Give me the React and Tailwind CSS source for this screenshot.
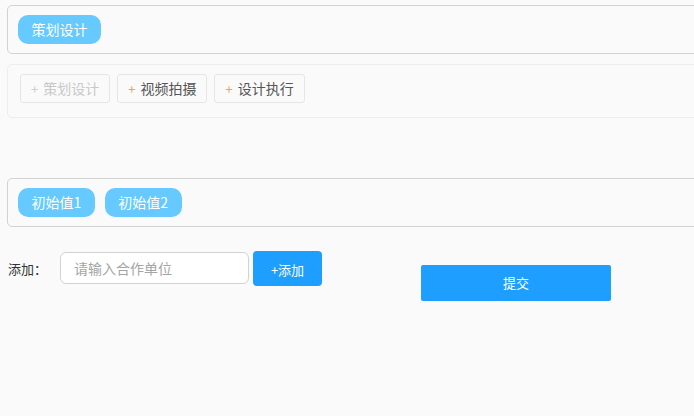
export default function App() {
  const font = { fontFamily: '"Noto Sans CJK SC", "Liberation Sans", sans-serif' };
  const options = [
    { label: "策划设计", disabled: true },
    { label: "视频拍摄", disabled: false },
    { label: "设计执行", disabled: false },
  ];

  return (
    <div className="w-[694px] h-[416px] overflow-hidden bg-[#fafafa] pt-[5px]" style={font}>
      <div className="ml-[7px] w-[720px] h-[49px] border border-[#d2d2d2] rounded-[5px] px-[10px] py-[9px] flex gap-[10px]">
        <span className="h-[29px] px-[13.5px] rounded-[10px] bg-[#66c9ff] text-white text-[14px] leading-[29px]">
          策划设计
        </span>
      </div>

      <div className="ml-[7px] mt-[10px] w-[720px] h-[54px] border border-[#ededed] rounded-[5px] px-[12px] py-[9px] flex gap-[7px]">
        {options.map((o) => (
          <button
            key={o.label}
            className={
              "h-[29px] px-[10px] rounded-[3px] border border-[#e6e6e6] text-[14px] flex items-center gap-[5px] " +
              (o.disabled ? "text-[#c8c8c8]" : "text-[#555]")
            }
          >
            <span className={"text-[13px] " + (o.disabled ? "text-[#cfcfcf]" : "text-[#f5a53a]")}>+</span>
            {o.label}
          </button>
        ))}
      </div>

      <div className="ml-[7px] mt-[60px] w-[720px] h-[49px] border border-[#d2d2d2] rounded-[5px] px-[10px] py-[9px] flex gap-[10px]">
        {["初始值1", "初始值2"].map((t) => (
          <span key={t} className="h-[29px] px-[13.5px] rounded-[10px] bg-[#66c9ff] text-white text-[14px] leading-[29px]">
            {t}
          </span>
        ))}
      </div>

      <div className="mt-[24px] flex items-start">
        <span className="ml-[8px] mt-[8px] text-[13px] text-[#333] w-[52px]">添加：</span>
        <input
          placeholder="请输入合作单位"
          className="w-[189px] h-[32px] mt-[1px] border border-[#d2d2d2] rounded-[6px] bg-white px-[13px] text-[14px] text-[#333] placeholder-[#a5a5a5] outline-none"
        />
        <button className="ml-[4px] w-[69px] h-[35px] rounded-[4px] bg-[#1e9fff] text-white text-[13px] pt-[3px]">
          +添加
        </button>
        <button className="ml-[99px] mt-[14px] w-[190px] h-[36px] rounded-[2px] bg-[#1e9fff] text-white text-[13px]">
          提交
        </button>
      </div>
    </div>
  );
}
